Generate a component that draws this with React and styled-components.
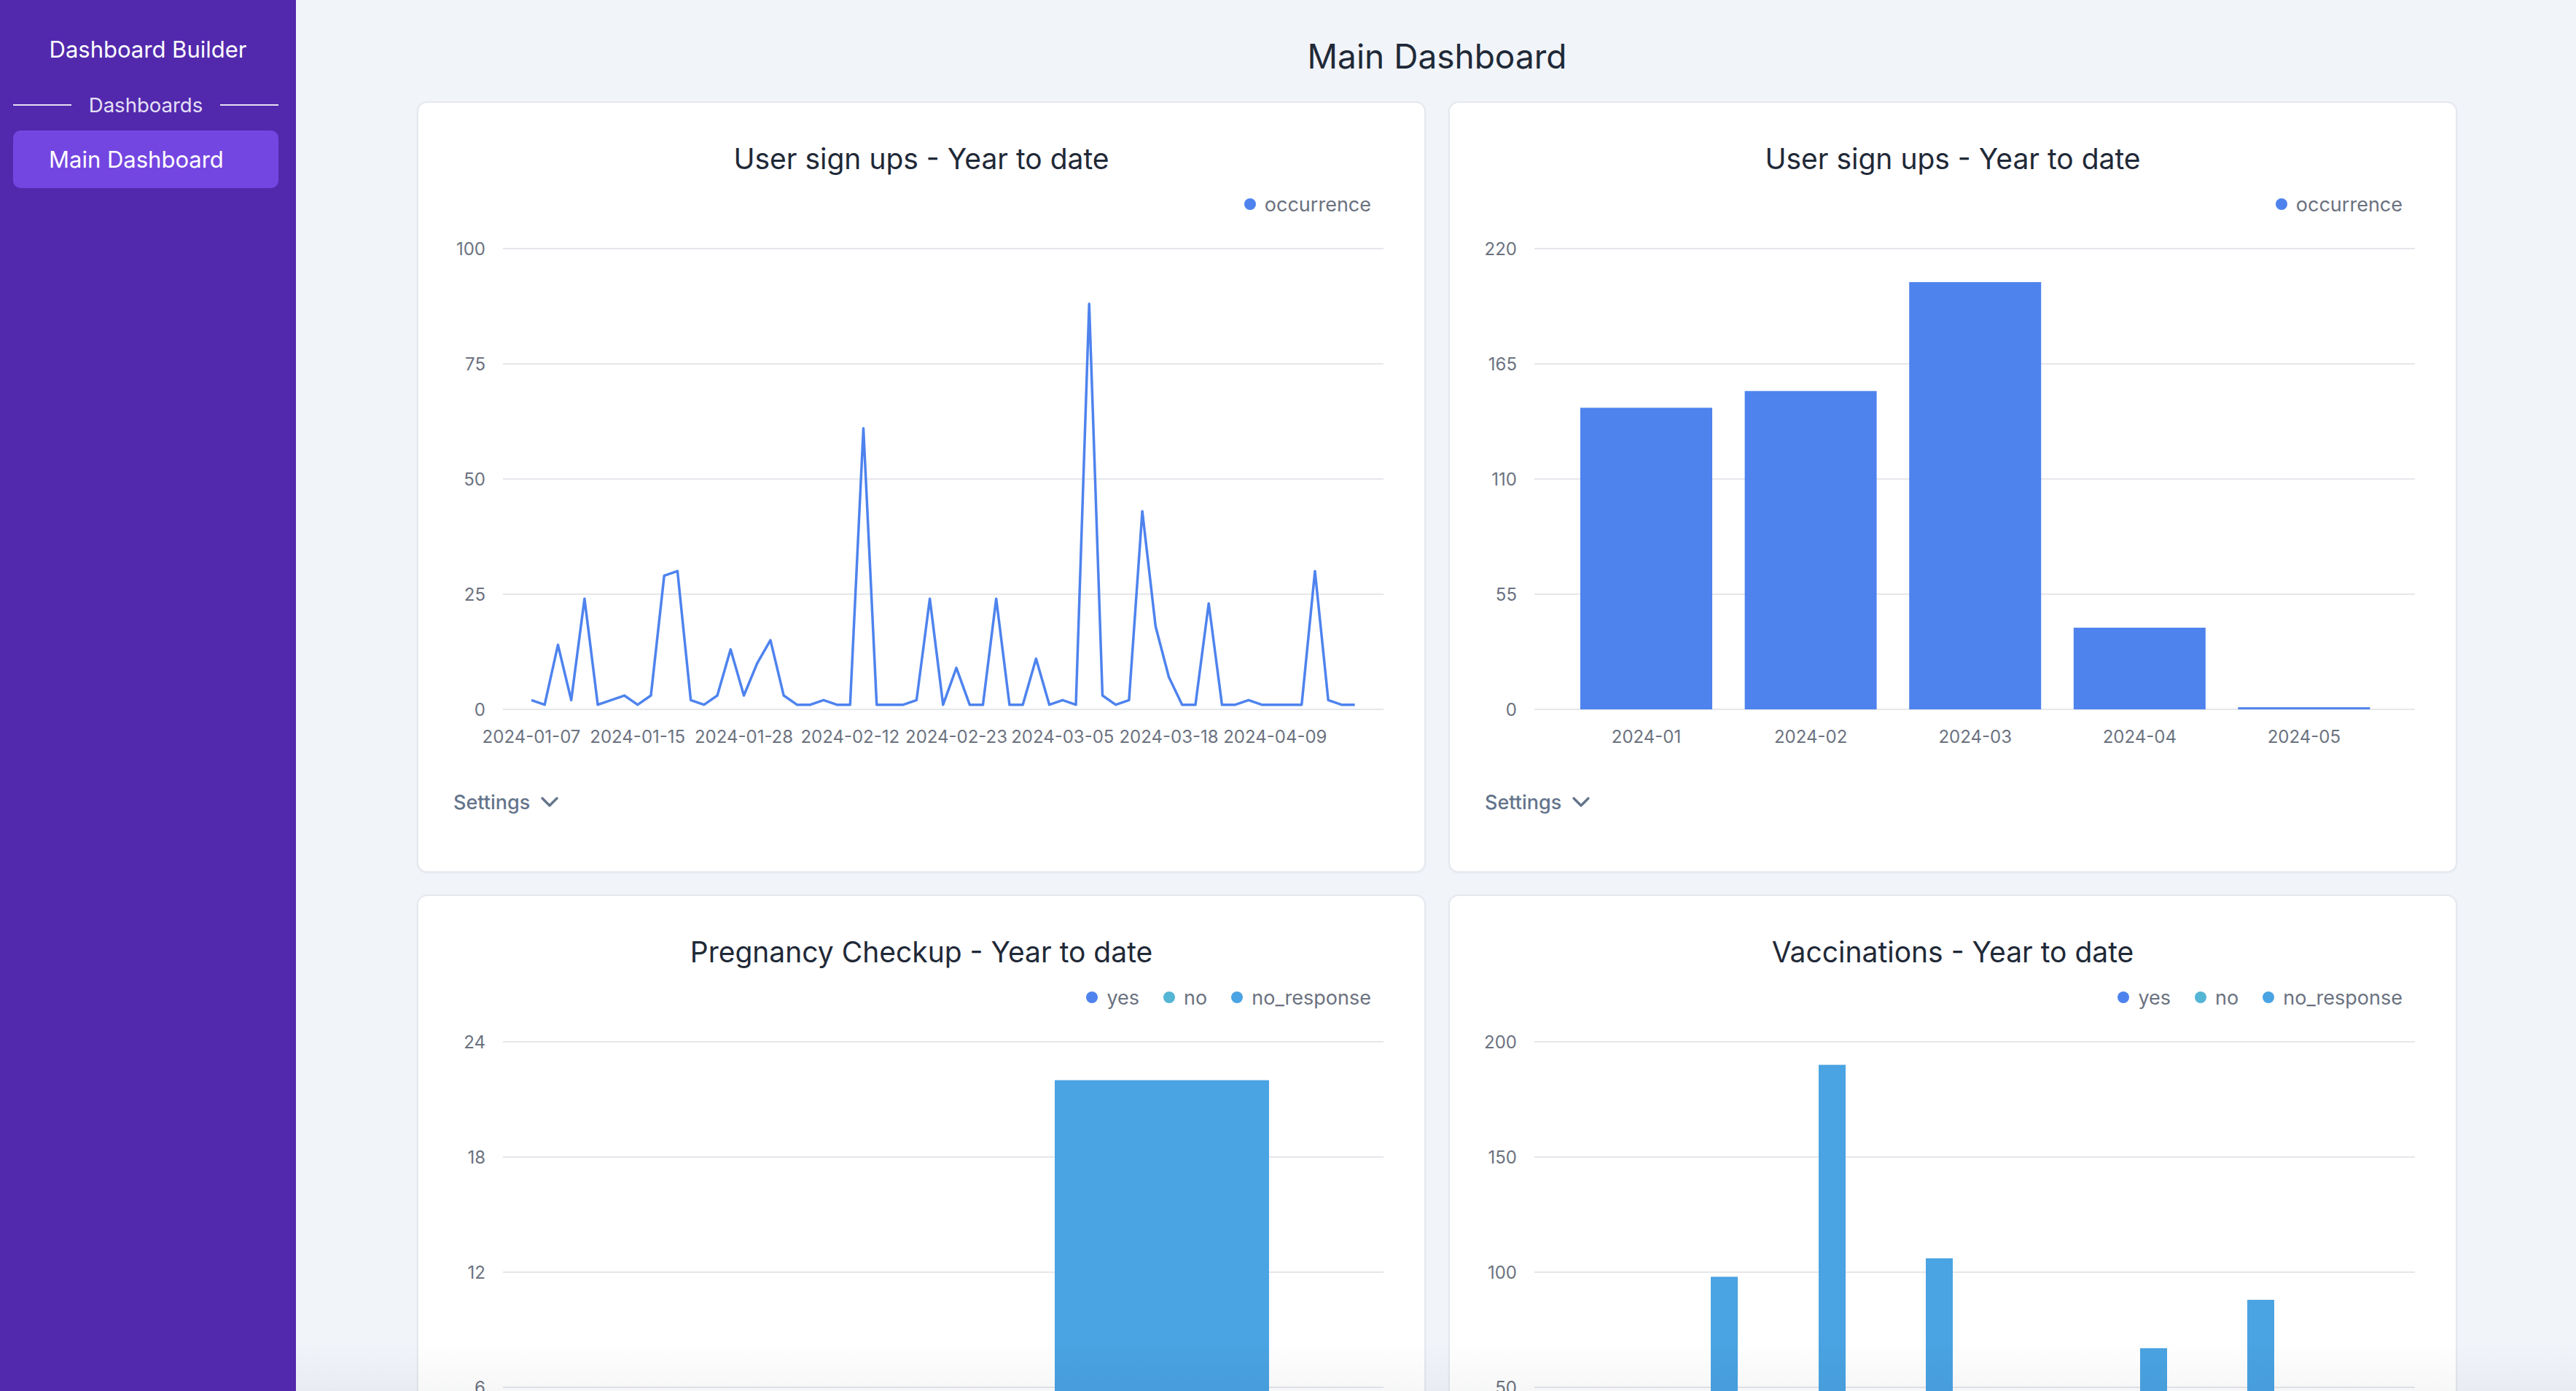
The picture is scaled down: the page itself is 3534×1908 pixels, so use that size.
import styled, { createGlobalStyle } from "styled-components";
import { ChevronDown } from "lucide-react";

// chart drawing area, in px inside each card's svg
const PLOT = { left: 116, right: 1324, top: 31, bottom: 663 };

const signUpsDaily = [
  2, 1, 14, 2, 24, 1, 2, 3, 1, 3, 29, 30, 2, 1, 3, 13, 3, 10, 15, 3, 1, 1, 2,
  1, 1, 61, 1, 1, 1, 2, 24, 1, 9, 1, 1, 24, 1, 1, 11, 1, 2, 1, 88, 3, 1, 2, 43,
  18, 7, 1, 1, 23, 1, 1, 2, 1, 1, 1, 1, 30, 2, 1, 1,
];
const dailyLabels = {
  0: "2024-01-07",
  8: "2024-01-15",
  16: "2024-01-28",
  24: "2024-02-12",
  32: "2024-02-23",
  40: "2024-03-05",
  48: "2024-03-18",
  56: "2024-04-09",
};

const signUpsMonthly = [
  { label: "2024-01", value: 144 },
  { label: "2024-02", value: 152 },
  { label: "2024-03", value: 204 },
  { label: "2024-04", value: 39 },
  { label: "2024-05", value: 1 },
];

const pregnancyBars = [{ x: 873, width: 294, value: 22 }];
const vaccinationBars = [
  { x: 358, width: 37, value: 98 },
  { x: 506, width: 37, value: 190 },
  { x: 653, width: 37, value: 106 },
  { x: 947, width: 37, value: 67 },
  { x: 1094, width: 37, value: 88 },
];

const BLUE = "#4e83ee";
const CYAN = "#55b5d4";
const SKY = "#4aa3e2";

const yesNoLegend = [
  { label: "yes", color: BLUE },
  { label: "no", color: CYAN },
  { label: "no_response", color: SKY },
];

const toY = (value, max) =>
  PLOT.bottom - (value / max) * (PLOT.bottom - PLOT.top);

const Axis = ({ ticks }) => {
  const max = ticks[0];
  return ticks.map((t) => (
    <g key={t}>
      <GridLine x1={PLOT.left} x2={PLOT.right} y1={toY(t, max)} y2={toY(t, max)} />
      <AxisText x={92} y={toY(t, max)} textAnchor="end">
        {t}
      </AxisText>
    </g>
  ));
};

const LineChart = ({ values, labels, ticks }) => {
  const max = ticks[0];
  const points = values
    .map((v, i) => `${155 + i * 18.22},${toY(v, max)}`)
    .join(" ");
  return (
    <ChartSvg viewBox="0 0 1380 730">
      <Axis ticks={ticks} />
      <ChartLine points={points} />
      {Object.entries(labels).map(([i, label]) => (
        <AxisText key={i} x={155 + i * 18.22} y={700} textAnchor="middle">
          {label}
        </AxisText>
      ))}
    </ChartSvg>
  );
};

const MonthBarChart = ({ data, ticks }) => {
  const max = ticks[0];
  return (
    <ChartSvg viewBox="0 0 1380 730">
      <Axis ticks={ticks} />
      {data.map((d, i) => {
        const x = 179 + i * 225.6;
        return (
          <g key={d.label}>
            <Bar
              x={x}
              y={toY(d.value, max)}
              width={181}
              height={PLOT.bottom - toY(d.value, max)}
              $color={BLUE}
            />
            <AxisText x={x + 90.5} y={700} textAnchor="middle">
              {d.label}
            </AxisText>
          </g>
        );
      })}
    </ChartSvg>
  );
};

const GroupBarChart = ({ bars, ticks }) => {
  const max = ticks[0];
  return (
    <ChartSvg viewBox="0 0 1380 730">
      <Axis ticks={ticks} />
      {bars.map((b) => (
        <Bar
          key={b.x}
          x={b.x}
          y={toY(b.value, max)}
          width={b.width}
          height={PLOT.bottom - toY(b.value, max)}
          $color={SKY}
        />
      ))}
    </ChartSvg>
  );
};

const ChartCard = ({ title, legend, children }) => (
  <Card>
    <CardTitle>{title}</CardTitle>
    <Legend>
      {legend.map((l) => (
        <LegendItem key={l.label}>
          <Dot $color={l.color} />
          {l.label}
        </LegendItem>
      ))}
    </Legend>
    {children}
    <SettingsButton>
      Settings
      <ChevronDown size={40} strokeWidth={2} />
    </SettingsButton>
  </Card>
);

const App = () => {
  return (
    <>
      <GlobalStyle />
      <Layout>
        <Sidebar>
          <Brand>Dashboard Builder</Brand>
          <SectionDivider>
            <DividerLine />
            Dashboards
            <DividerLine />
          </SectionDivider>
          <NavItem $active>Main Dashboard</NavItem>
        </Sidebar>

        <Main>
          <PageTitle>Main Dashboard</PageTitle>
          <Grid>
            <ChartCard
              title="User sign ups - Year to date"
              legend={[{ label: "occurrence", color: BLUE }]}
            >
              <LineChart
                values={signUpsDaily}
                labels={dailyLabels}
                ticks={[100, 75, 50, 25, 0]}
              />
            </ChartCard>
            <ChartCard
              title="User sign ups - Year to date"
              legend={[{ label: "occurrence", color: BLUE }]}
            >
              <MonthBarChart data={signUpsMonthly} ticks={[220, 165, 110, 55, 0]} />
            </ChartCard>
            <ChartCard title="Pregnancy Checkup - Year to date" legend={yesNoLegend}>
              <GroupBarChart bars={pregnancyBars} ticks={[24, 18, 12, 6, 0]} />
            </ChartCard>
            <ChartCard title="Vaccinations - Year to date" legend={yesNoLegend}>
              <GroupBarChart bars={vaccinationBars} ticks={[200, 150, 100, 50, 0]} />
            </ChartCard>
          </Grid>
        </Main>
        <BottomFade />
      </Layout>
    </>
  );
};

export default App;

// styles
const GlobalStyle = createGlobalStyle`
  body {
    margin: 0;
    font-family: Inter, "Noto Sans", sans-serif;
    background: #f1f4f9;
  }
`;

const Layout = styled.div`
  display: flex;
  height: 100vh;
  overflow: hidden;
`;

const Sidebar = styled.aside`
  width: 406px;
  flex-shrink: 0;
  background: #5229ad;
  padding-top: 48px;
  box-sizing: border-box;
  display: flex;
  flex-direction: column;
`;

const Brand = styled.div`
  font-size: 31px;
  line-height: 40px;
  color: #ffffff;
  text-align: center;
`;

const SectionDivider = styled.div`
  margin-top: 40px;
  padding: 0 24px 0 18px;
  display: flex;
  align-items: center;
  gap: 24px;
  font-size: 27.5px;
  line-height: 32px;
  color: #e6e0f7;
`;

const DividerLine = styled.span`
  flex: 1;
  height: 2px;
  background: rgba(255, 255, 255, 0.85);
`;

const NavItem = styled.div`
  margin: 19px 24px 0 18px;
  height: 79px;
  border-radius: 10px;
  padding-left: 49px;
  display: flex;
  align-items: center;
  font-size: 31px;
  color: #ffffff;
  background: ${(p) => (p.$active ? "#7446e1" : "transparent")};
  cursor: pointer;
`;

const Main = styled.main`
  flex: 1;
  padding: 49px 163px 0 166px;
  overflow: hidden;
`;

const PageTitle = styled.h1`
  margin: 0;
  font-size: 46px;
  line-height: 56px;
  font-weight: 400;
  color: #1f2937;
  text-align: center;
`;

const Grid = styled.div`
  margin-top: 34px;
  display: grid;
  grid-template-columns: 1fr 1fr;
  column-gap: 31px;
  row-gap: 30px;
`;

const Card = styled.section`
  box-sizing: border-box;
  height: 1058px;
  background: #ffffff;
  border: 2px solid #e5e8ee;
  border-radius: 14px;
  box-shadow: 0 1px 3px rgba(15, 23, 42, 0.04);
  padding-top: 53px;
  display: flex;
  flex-direction: column;
`;

const CardTitle = styled.h2`
  margin: 0;
  font-size: 39px;
  line-height: 48px;
  font-weight: 400;
  color: #1f2937;
  text-align: center;
`;

const Legend = styled.div`
  margin-top: 20px;
  height: 36px;
  padding-right: 73px;
  display: flex;
  justify-content: flex-end;
  align-items: center;
  gap: 33px;
  font-size: 27px;
  color: #6b7280;
`;

const LegendItem = styled.span`
  display: flex;
  align-items: center;
  gap: 12px;
`;

const Dot = styled.span`
  width: 16px;
  height: 16px;
  border-radius: 50%;
  background: ${(p) => p.$color};
`;

const ChartSvg = styled.svg`
  display: block;
  margin-top: 12px;
  width: 1380px;
  height: 730px;
  flex-shrink: 0;
`;

const GridLine = styled.line`
  stroke: #e5e7eb;
  stroke-width: 2;
`;

const AxisText = styled.text`
  font-family: Inter, "Noto Sans", sans-serif;
  font-size: 24px;
  fill: #6b7280;
  dominant-baseline: central;
`;

const ChartLine = styled.polyline`
  fill: none;
  stroke: ${BLUE};
  stroke-width: 3.5;
  stroke-linejoin: round;
`;

const Bar = styled.rect`
  fill: ${(p) => p.$color};
`;

const SettingsButton = styled.button`
  margin: 42px 0 0 48px;
  align-self: flex-start;
  height: 36px;
  padding: 0;
  border: none;
  background: none;
  display: flex;
  align-items: center;
  gap: 7px;
  font-family: Inter, "Noto Sans", sans-serif;
  font-size: 27px;
  font-weight: 500;
  color: #64748b;
  cursor: pointer;
`;

const BottomFade = styled.div`
  position: fixed;
  left: 406px;
  right: 0;
  bottom: 0;
  height: 70px;
  pointer-events: none;
  background: linear-gradient(rgba(15, 23, 42, 0), rgba(15, 23, 42, 0.035));
`;
